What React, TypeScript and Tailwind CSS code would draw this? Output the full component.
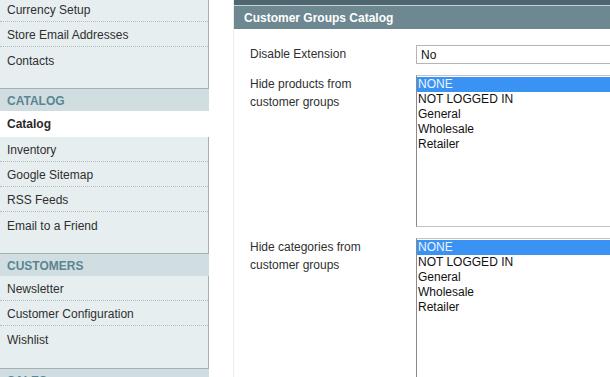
import React from "react";

const font = { fontFamily: '"Liberation Sans", Arial, sans-serif' };

function Row({ label, last }: { label: string; last?: boolean }) {
  return (
    <div
      className={
        "h-[25px] flex items-center pl-[7px] pt-[2px] text-[12px] text-[#2f2f2f] " +
        (last ? "" : "border-b border-dotted border-[#b4bec1]")
      }
    >
      {label}
    </div>
  );
}

function Group({ items, pb }: { items: string[]; pb: string }) {
  return (
    <div className={"bg-[#e7eef0] border-r border-b border-[#a6afb2] " + pb}>
      {items.map((it, i) => (
        <Row key={it} label={it} last={i === items.length - 1} />
      ))}
    </div>
  );
}

function Header({ label }: { label: string }) {
  return (
    <div className="h-[22px] flex items-center pl-[7px] pt-px bg-[#d1dee1] text-[12px] font-bold text-[#5a8591] uppercase">
      {label}
    </div>
  );
}

function ListBox({ h }: { h: string }) {
  const opts = ["NONE", "NOT LOGGED IN", "General", "Wholesale", "Retailer"];
  return (
    <div className={"border border-[#c3c3c3] border-l-[#8a8a8a] bg-white pt-px " + h}>
      {opts.map((o, i) => (
        <div
          key={o}
          className={
            "h-[15px] leading-[15px] text-[12px] pl-px " +
            (i === 0 ? "bg-[#3a92f2] text-[#eef5ff]" : "text-[#111]")
          }
        >
          {o}
        </div>
      ))}
    </div>
  );
}

export default function App() {
  return (
    <div className="w-[610px] h-[377px] overflow-hidden flex items-start bg-white" style={font}>
      <div className="w-[209px] shrink-0 -mt-[3px]">
        <Group items={["Currency Setup", "Store Email Addresses", "Contacts"]} pb="pb-[16px]" />
        <Header label="Catalog" />
        <div className="h-[26px] flex items-center pl-[7px] bg-white text-[12px] font-bold text-[#2a2a2a]">
          Catalog
        </div>
        <Group items={["Inventory", "Google Sitemap", "RSS Feeds", "Email to a Friend"]} pb="pb-[16px]" />
        <Header label="Customers" />
        <Group items={["Newsletter", "Customer Configuration", "Wishlist"]} pb="pb-[17px]" />
        <Header label="Sales" />
      </div>
      <div className="w-[24px] shrink-0" />
      <div className="flex-1 h-[420px] border-l border-[#ececec]">
        <div className="h-[5px] bg-[#4e6670]" />
        <div className="h-px bg-[#c8d2d5]" />
        <div className="h-[23px] flex items-center pl-[10px] bg-[#6e8891] text-[12px] font-bold text-white">
          Customer Groups Catalog
        </div>
        <div className="pt-[16px] pl-[16px] flex flex-col gap-[11px]">
          <div className="flex">
            <div className="w-[166px] shrink-0 text-[12px] text-[#2f2f2f] leading-[18px]">
              Disable Extension
            </div>
            <div className="w-[220px] h-[19px] border border-[#b5b5b5] flex items-center pl-[4px] text-[12px] text-[#111]">
              No
            </div>
          </div>
          <div className="flex">
            <div className="w-[166px] shrink-0 text-[12px] text-[#2f2f2f] leading-[18px]">
              Hide products from
              <br />
              customer groups
            </div>
            <div className="w-[220px]">
              <ListBox h="h-[152px]" />
            </div>
          </div>
          <div className="flex">
            <div className="w-[166px] shrink-0 text-[12px] text-[#2f2f2f] leading-[18px]">
              Hide categories from
              <br />
              customer groups
            </div>
            <div className="w-[220px]">
              <ListBox h="h-[153px]" />
            </div>
          </div>
        </div>
      </div>
    </div>
  );
}
